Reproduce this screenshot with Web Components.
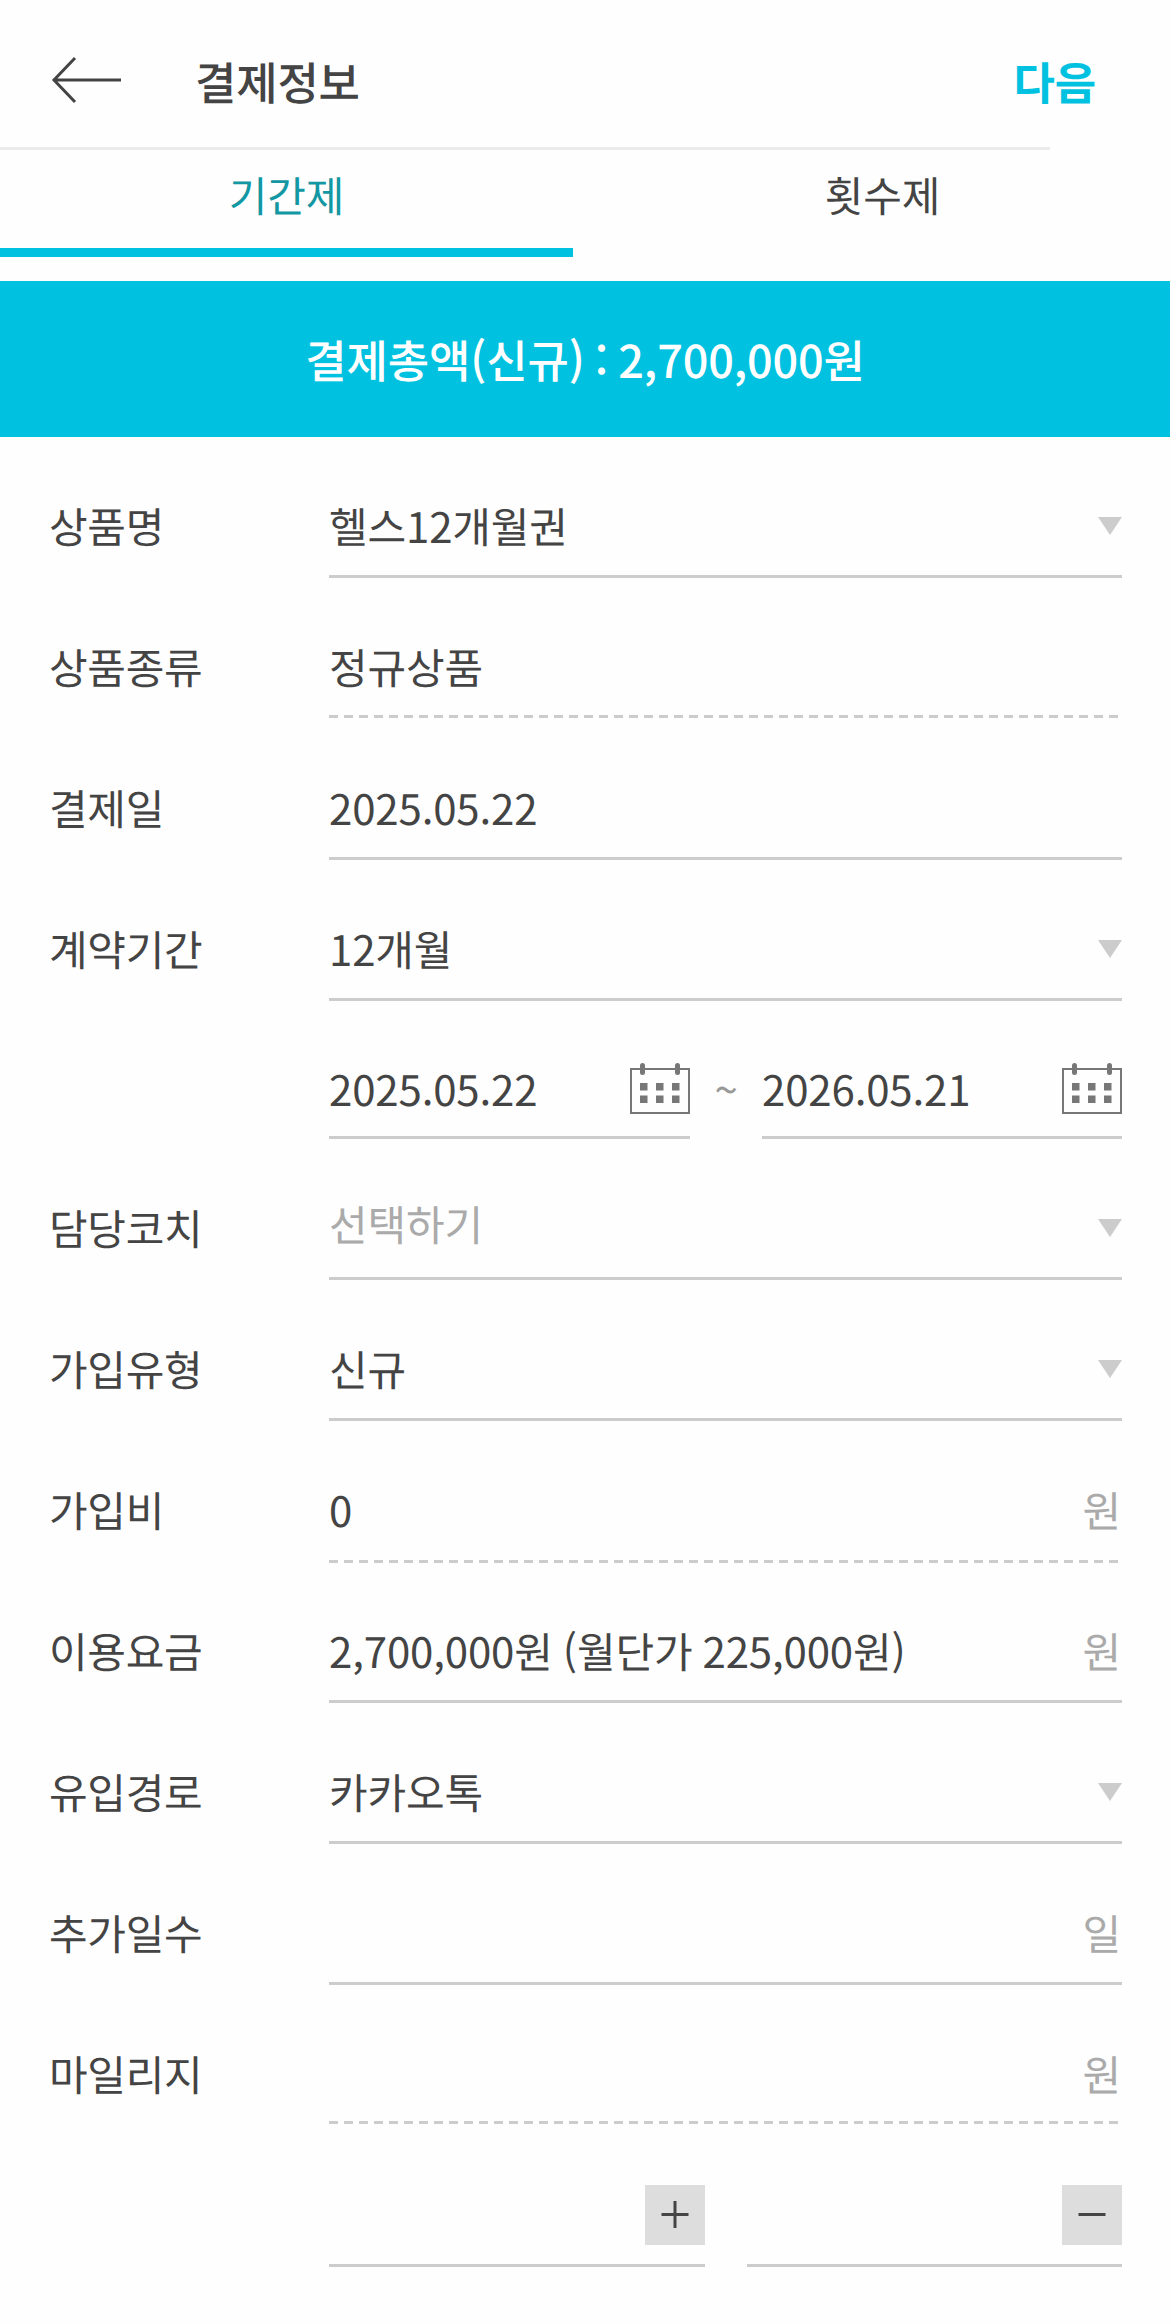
<!DOCTYPE html>
<html lang="ko">
<head>
<meta charset="UTF-8">
<title>결제정보</title>
<style>
    body {
        margin: 0;
        background: #fefefe;
        color: #444;
        font-family: "Noto Sans CJK KR", sans-serif;
        font-size: 42px;
        line-height: 60px;
        letter-spacing: -0.15px;
        word-spacing: -1.5px;
        text-rendering: geometricPrecision;
    }
    .form {
        display: flex;
        flex-direction: column;
    }
</style>
</head>
<body>
<page-header>결제정보<span slot="action">다음</span></page-header>
<tab-bar>
    <tab-item active>기간제</tab-item>
    <tab-item>횟수제</tab-item>
</tab-bar>
<total-banner>결제총액(신규) : 2,700,000원</total-banner>
<div class="form">
    <form-row label="상품명"><line-field icon="select">헬스12개월권</line-field></form-row>
    <form-row label="상품종류"><line-field dashed style="margin-bottom: 1px">정규상품</line-field></form-row>
    <form-row label="결제일"><line-field>2025.05.22</line-field></form-row>
    <form-row label="계약기간"><line-field icon="select">12개월</line-field></form-row>
    <form-row range>
        <line-field icon="calendar">2025.05.22</line-field>
        <range-mark>~</range-mark>
        <line-field icon="calendar">2026.05.21</line-field>
    </form-row>
    <form-row label="담당코치"><line-field icon="select" placeholder>선택하기</line-field></form-row>
    <form-row label="가입유형"><line-field icon="select">신규</line-field></form-row>
    <form-row label="가입비"><line-field dashed unit="원" style="margin-bottom: -1px">0</line-field></form-row>
    <form-row label="이용요금"><line-field unit="원">2,700,000원 (월단가 225,000원)</line-field></form-row>
    <form-row label="유입경로"><line-field icon="select">카카오톡</line-field></form-row>
    <form-row label="추가일수"><line-field unit="일"></line-field></form-row>
    <form-row label="마일리지"><line-field dashed unit="원" style="margin-bottom: 2px"></line-field></form-row>
    <form-row pair>
        <line-field icon="plus"></line-field>
        <line-field icon="minus"></line-field>
    </form-row>
</div>

<script>
const ICONS = {
    select: `<svg width="24" height="18" viewBox="0 0 24 18"><path d="M0 0h24L12 18z" fill="#ccc"/></svg>`,
    calendar: `
        <svg width="60" height="52" viewBox="0 0 60 52">
            <rect x="1" y="6" width="58" height="44" fill="none" stroke="#777" stroke-width="2"/>
            <g fill="#777">
                <rect x="10" y="0" width="5" height="12" rx="2.5"/>
                <rect x="45" y="0" width="5" height="12" rx="2.5"/>
                <path d="M10 20h7.500v7.500h-7.500zM26 20h7.500v7.500h-7.500zM42 20h7.500v7.500h-7.500z"/>
                <path d="M10 32.500h7.500v7.500h-7.500zM26 32.500h7.500v7.500h-7.500zM42 32.500h7.500v7.500h-7.500z"/>
            </g>
        </svg>`,
    plus: `<svg width="60" height="60" viewBox="0 0 60 60"><rect width="60" height="60" fill="#ddd"/><path d="M16.500 29.500h27M30 16v27" stroke="#444" stroke-width="3"/></svg>`,
    minus: `<svg width="60" height="60" viewBox="0 0 60 60"><rect width="60" height="60" fill="#ddd"/><path d="M16.500 29.500h27" stroke="#444" stroke-width="3"/></svg>`
};

class PageHeader extends HTMLElement {
    constructor() {
        super();
        this.attachShadow({ mode: 'open' });
        this.shadowRoot.innerHTML = `
            <style>
                :host {
                    display: block;
                    height: 150px;
                    font-size: 45px;
                    font-weight: 500;
                    letter-spacing: -0.2px;
                }
                .bar {
                    display: flex;
                    align-items: center;
                    height: 147px;
                    padding: 15px 74px 0 51px;
                    box-sizing: border-box;
                }
                svg {
                    margin: -2px 73px 0 0;
                }
                .title {
                    flex: 1;
                }
                .action {
                    color: #00c2e0;
                    font-weight: 700;
                }
                .line {
                    width: 1050px;
                    height: 3px;
                    background: #ebebeb;
                }
            </style>
            <div class="bar">
                <svg width="71" height="48" viewBox="0 0 71 48" fill="none" stroke="#444" stroke-width="3">
                    <path d="M24 2L3 24L24 46M2 24H70"/>
                </svg>
                <span class="title"><slot></slot></span>
                <span class="action"><slot name="action"></slot></span>
            </div>
            <div class="line"></div>
        `;
    }
}

class TabBar extends HTMLElement {
    constructor() {
        super();
        this.attachShadow({ mode: 'open' });
        this.shadowRoot.innerHTML = `
            <style>
                :host {
                    display: grid;
                    grid-template-columns: 573px 597px;
                    height: 107px;
                    margin-bottom: 24px;
                }
            </style>
            <slot></slot>
        `;
    }
}

class TabItem extends HTMLElement {
    constructor() {
        super();
        this.attachShadow({ mode: 'open' });
        this.shadowRoot.innerHTML = `
            <style>
                :host {
                    box-sizing: border-box;
                    padding-top: 15px;
                    text-align: center;
                    border-bottom: 9px solid transparent;
                }
                :host(:not([active])) {
                    padding-left: 22px;
                }
                :host([active]) {
                    color: #1297a3;
                    border-color: #00c2e0;
                }
            </style>
            <slot></slot>
        `;
    }
}

class TotalBanner extends HTMLElement {
    constructor() {
        super();
        this.attachShadow({ mode: 'open' });
        this.shadowRoot.innerHTML = `
            <style>
                :host {
                    display: flex;
                    align-items: center;
                    justify-content: center;
                    height: 156px;
                    background: #00c2e0;
                    color: #fff;
                    font-size: 45px;
                    font-weight: 500;
                    word-spacing: -2.2px;
                }
            </style>
            <span><slot></slot></span>
        `;
    }
}

class FormRow extends HTMLElement {
    constructor() {
        super();
        this.attachShadow({ mode: 'open' });
        this.shadowRoot.innerHTML = `
            <style>
                :host {
                    display: grid;
                    grid-template-columns: 280px 793px;
                    height: 141px;
                    padding-left: 49px;
                }
                .label {
                    padding-top: 59px;
                    letter-spacing: -0.3px;
                }
                .fields {
                    display: grid;
                    grid-template-columns: 1fr;
                }
                :host([range]) {
                    height: 138px;
                }
                :host([range]) .fields {
                    grid-template-columns: 361px 1fr 360px;
                }
                :host([pair]) .fields {
                    grid-template-columns: 376px 375px;
                    justify-content: space-between;
                }
            </style>
            <span class="label"></span>
            <div class="fields"><slot></slot></div>
        `;
        this.shadowRoot.querySelector('.label').textContent = this.getAttribute('label') || '';
    }
}

class RangeMark extends HTMLElement {
    constructor() {
        super();
        this.attachShadow({ mode: 'open' });
        this.shadowRoot.innerHTML = `
            <style>
                :host {
                    padding-top: 58px;
                    text-align: center;
                    color: #999;
                }
            </style>
            <slot></slot>
        `;
    }
}

class LineField extends HTMLElement {
    constructor() {
        super();
        this.attachShadow({ mode: 'open' });
        this.shadowRoot.innerHTML = `
            <style>
                :host {
                    display: flex;
                    justify-content: space-between;
                    box-sizing: border-box;
                    padding-top: 59px;
                    border-bottom: 3px solid #ccc;
                }
                :host([dashed]) {
                    border-color: transparent;
                    background: repeating-linear-gradient(90deg, #ccc 0 9px, transparent 9px 15px) left bottom / 100% 3px no-repeat border-box;
                }
                :host([placeholder]) .value {
                    color: #aaa;
                    margin-top: -4px;
                }
                .end {
                    color: #aaa;
                }
                :host([unit]) .end {
                    margin-right: 1px;
                }
                svg {
                    display: block;
                }
                :host([icon="select"]) svg {
                    margin-top: 21px;
                }
                :host([icon="calendar"]) svg {
                    margin-top: 3px;
                }
                :host([icon="calendar"]) .value {
                    margin-top: -1px;
                }
            </style>
            <span class="value"><slot></slot></span>
            <span class="end"></span>
        `;
        const end = this.shadowRoot.querySelector('.end');
        if (this.hasAttribute('icon')) {
            end.innerHTML = ICONS[this.getAttribute('icon')];
        } else {
            end.textContent = this.getAttribute('unit') || '';
        }
    }
}

customElements.define('page-header', PageHeader);
customElements.define('tab-bar', TabBar);
customElements.define('tab-item', TabItem);
customElements.define('total-banner', TotalBanner);
customElements.define('form-row', FormRow);
customElements.define('range-mark', RangeMark);
customElements.define('line-field', LineField);
</script>
</body>
</html>
